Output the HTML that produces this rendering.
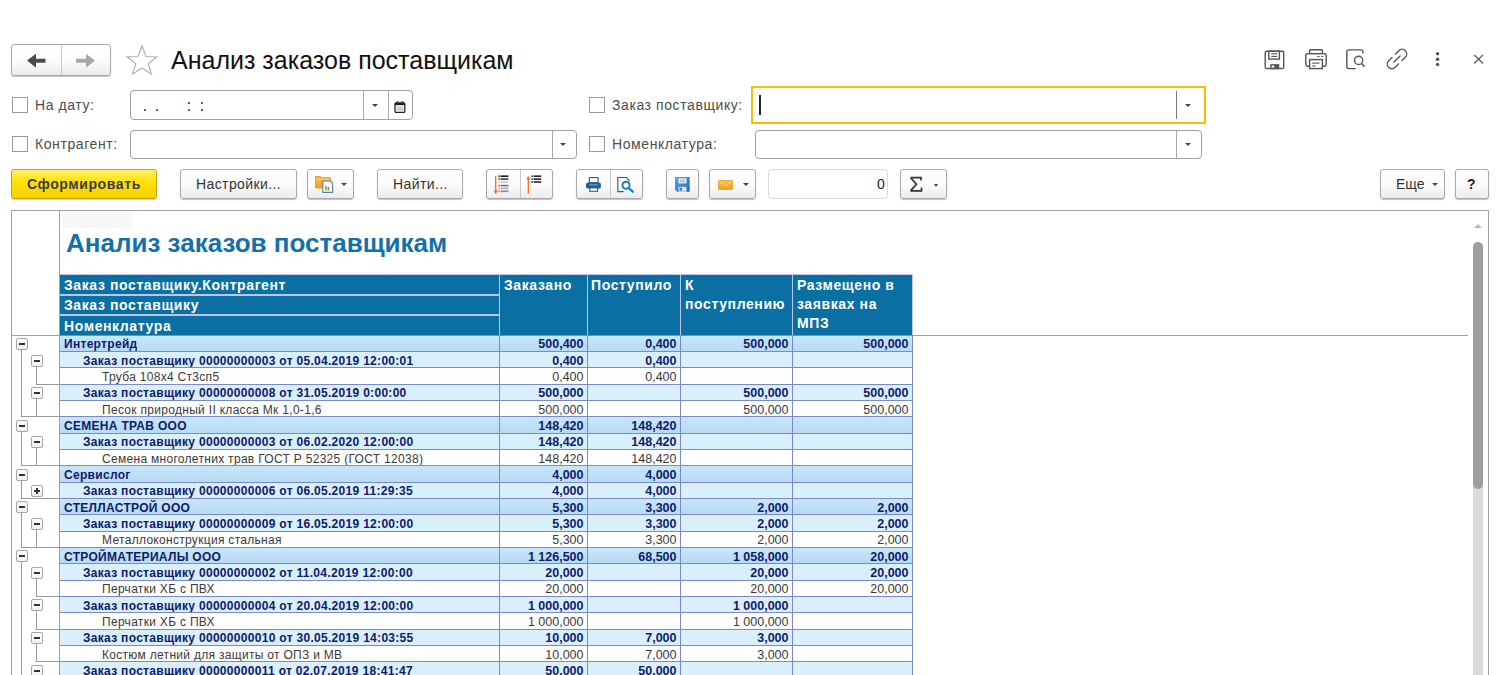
<!DOCTYPE html><html><head><meta charset='utf-8'><title>Анализ заказов поставщикам</title><style>
*{box-sizing:border-box;margin:0;padding:0}
html,body{width:1500px;height:675px;overflow:hidden;background:#fff;font-family:"Liberation Sans",sans-serif;color:#333}
.abs{position:absolute}
.btn{position:absolute;border:1px solid #a9a9a9;border-radius:3px;background:linear-gradient(#ffffff 0%,#fbfbfb 55%,#ececec 100%);box-shadow:0 1px 1px rgba(0,0,0,.25)}
.lbl{position:absolute;font-size:14px;letter-spacing:.58px;color:#4d4d4d;white-space:nowrap;line-height:16px}
.chk{position:absolute;width:16px;height:16px;border:1px solid #9b9b9b;background:#fff}
.fld{position:absolute;border:1px solid #a0a0a0;border-radius:4px;background:#fff}
.vd{position:absolute;top:0;bottom:0;width:1px;background:#a8a8a8}
.arr{position:absolute;width:0;height:0;border-left:4px solid transparent;border-right:4px solid transparent;border-top:4px solid #444}
.btxt{position:absolute;font-size:14px;letter-spacing:.4px;color:#333;white-space:nowrap;line-height:16px}
.row{position:absolute;left:60px;width:853px}
.cell{position:absolute;top:0;height:100%;white-space:nowrap;overflow:hidden;font-size:12px;line-height:15px;padding-top:1.6px}
.hd{position:absolute;color:#fff;font-weight:bold;font-size:14px;letter-spacing:.6px;line-height:19.2px;white-space:nowrap;margin-top:.8px}
.tg{position:absolute;width:12px;height:12px;border:1px solid #a6a6a6;border-radius:2px;background:linear-gradient(#fff,#f0f0f0)}
.tg:after{content:"";position:absolute;left:2px;top:4px;width:6px;height:2px;background:#333}
.tg.plus:before{content:"";position:absolute;left:4px;top:2px;width:2px;height:6px;background:#333}
.tl{position:absolute;background:#9a9a9a}
</style></head><body>
<div class="btn" style="left:11px;top:44px;width:100px;height:32px"></div>
<div class="abs" style="left:61px;top:45px;width:1px;height:30px;background:#c8c8c8"></div>
<svg class="abs" style="left:26px;top:52px" width="24" height="16" viewBox="0 0 24 16"><path d="M1 8.5 L10 1.8 L10 6.8 L19.5 6.8 L19.5 10.7 L10 10.7 L10 15.7 Z" fill="#4a4a4a"/></svg>
<svg class="abs" style="left:73px;top:52px" width="24" height="16" viewBox="0 0 24 16"><path d="M22 8.5 L13 1.8 L13 6.8 L3 6.8 L3 10.7 L13 10.7 L13 15.7 Z" fill="#a8a8a8"/></svg>
<svg class="abs" style="left:125px;top:44px" width="34" height="32" viewBox="0 0 34 32"><path d="M17 2 L21 12.5 L32 12.8 L23.3 19.6 L26.4 30.2 L17 24 L7.6 30.2 L10.7 19.6 L2 12.8 L13 12.5 Z" fill="none" stroke="#a9b3b8" stroke-width="1.2"/></svg>
<div class="abs" style="left:171px;top:45px;font-size:25px;letter-spacing:0;line-height:30px;color:#111;white-space:nowrap">Анализ заказов поставщикам</div>
<svg class="abs" style="left:1258px;top:44px" width="70" height="30" viewBox="0 0 70 30" fill="none" stroke="#555555" stroke-width="1.4"><rect x="7.2" y="7.2" width="18.5" height="17.3" rx="1.6"/><rect x="10.8" y="7.2" width="10.6" height="7.9"/><line x1="13.2" y1="9.8" x2="19.3" y2="9.8" stroke-width="1.1"/><line x1="13.2" y1="12.4" x2="19.3" y2="12.4" stroke-width="1.1"/><rect x="12.9" y="20.9" width="7.6" height="3.6"/><rect x="16.3" y="20.4" width="4.4" height="4.3" fill="#555555" stroke="none"/><rect x="51.6" y="5.8" width="12.8" height="3.8" rx="0.8"/><path d="M51.6 22.2 H50 A2.2 2.2 0 0 1 47.8 20 V11.8 A2.2 2.2 0 0 1 50 9.6 H66 A2.2 2.2 0 0 1 68.2 11.8 V20 A2.2 2.2 0 0 1 66 22.2 H64.4"/><rect x="51.6" y="15.6" width="12.8" height="9" fill="#fff"/><line x1="54.2" y1="19.1" x2="61.6" y2="19.1" stroke-width="1.1"/><line x1="54.2" y1="22" x2="57.4" y2="22" stroke-width="1.1"/><line x1="59.3" y1="12.5" x2="61.6" y2="12.5" stroke-width="1.1"/><line x1="63.2" y1="12.5" x2="65.3" y2="12.5" stroke-width="1.1"/></svg>
<svg class="abs" style="left:1338px;top:44px" width="30" height="30" viewBox="0 0 30 30" fill="none" stroke="#555555" stroke-width="1.4"><path d="M17.8 24.6 H10.8 A2 2 0 0 1 8.8 22.6 V7.9 A2 2 0 0 1 10.8 5.9 H22.9 A2 2 0 0 1 24.9 7.9 V9.4"/><circle cx="20.6" cy="16.4" r="4.1"/><line x1="23.6" y1="19.5" x2="26.5" y2="22.8" stroke-width="1.6"/></svg>
<svg class="abs" style="left:1381.7px;top:44px" width="30" height="30" viewBox="0 0 30 30" fill="none" stroke="#555555" stroke-width="1.4" stroke-linecap="round"><g transform="translate(15 15) rotate(-45)"><path d="M-2.3 -4.6 H-7.2 A4.6 4.6 0 0 0 -7.2 4.6 H-2.3"/><path d="M2.6 -4.6 H7.2 A4.6 4.6 0 0 1 7.2 4.6 H2.6"/><line x1="-4.3" y1="0" x2="4.4" y2="0"/></g></svg>
<svg class="abs" style="left:1432px;top:48px" width="12" height="22" viewBox="0 0 12 22" fill="#555555"><circle cx="5.6" cy="5.8" r="1.75"/><circle cx="5.6" cy="11.2" r="1.75"/><circle cx="5.6" cy="16.5" r="1.75"/></svg>
<svg class="abs" style="left:1462px;top:44px" width="35" height="30" viewBox="0 0 35 30" stroke="#555555" stroke-width="1.25"><line x1="12.2" y1="10.9" x2="21" y2="19.5"/><line x1="21" y1="10.9" x2="12.2" y2="19.5"/></svg>
<div class="chk" style="left:12px;top:97px"></div>
<div class="lbl" style="left:35px;top:97px">На дату:</div>
<div class="fld" style="left:130px;top:90px;width:283px;height:30px"><div class="vd" style="left:232px"></div><div class="vd" style="left:257px"></div></div>
<div class="arr" style="left:372.3px;top:103.8px;border-left-width:3px;border-right-width:3px;border-top-width:3.5px"></div>
<svg class="abs" style="left:393px;top:100px" width="13" height="14" viewBox="0 0 13 14"><rect x="2" y="2.8" width="9.8" height="9.6" rx="1" fill="#fff" stroke="#222" stroke-width="1.3"/><rect x="2" y="2.8" width="9.8" height="2.4" fill="#222"/><rect x="3.8" y="1.2" width="1.3" height="2" fill="#333"/><rect x="8.6" y="1.2" width="1.3" height="2" fill="#333"/><rect x="3.6" y="6.8" width="6.6" height="1.6" fill="#bbb"/><rect x="3.6" y="9.3" width="6.6" height="1" fill="#999"/></svg>
<div class="abs" style="left:143.5px;top:108.5px;width:2px;height:2px;border-radius:1px;background:#4a1a48"></div>
<div class="abs" style="left:155.8px;top:108.5px;width:2px;height:2px;border-radius:1px;background:#4a1a48"></div>
<div class="abs" style="left:188.2px;top:101.8px;width:2px;height:2px;border-radius:1px;background:#4a1a48"></div>
<div class="abs" style="left:188.2px;top:108.5px;width:2px;height:2px;border-radius:1px;background:#4a1a48"></div>
<div class="abs" style="left:200.8px;top:101.8px;width:2px;height:2px;border-radius:1px;background:#4a1a48"></div>
<div class="abs" style="left:200.8px;top:108.5px;width:2px;height:2px;border-radius:1px;background:#4a1a48"></div>
<div class="chk" style="left:12px;top:136px"></div>
<div class="lbl" style="left:35px;top:136px">Контрагент:</div>
<div class="fld" style="left:130px;top:130px;width:447px;height:29px"><div class="vd" style="left:420.5px"></div></div>
<div class="arr" style="left:560.3px;top:143.3px;border-left-width:3px;border-right-width:3px;border-top-width:3.5px"></div>
<div class="chk" style="left:589px;top:97px"></div>
<div class="lbl" style="left:612px;top:97px">Заказ поставщику:</div>
<div class="abs" style="left:751px;top:86px;width:455px;height:38px;border:2px solid #f7bf00;background:#fff"></div>
<div class="abs" style="left:1176px;top:91px;width:1px;height:28px;background:#777"></div>
<div class="abs" style="left:759px;top:95px;width:2px;height:20px;background:#222"></div>
<div class="arr" style="left:1184.9px;top:104px;border-left-width:3px;border-right-width:3px;border-top-width:3.5px"></div>
<div class="chk" style="left:589px;top:136px"></div>
<div class="lbl" style="left:612px;top:136px">Номенклатура:</div>
<div class="fld" style="left:755px;top:130px;width:447px;height:29px"><div class="vd" style="left:420px"></div></div>
<div class="arr" style="left:1184.9px;top:143.4px;border-left-width:3px;border-right-width:3px;border-top-width:3.5px"></div>
<div class="abs" style="left:11px;top:169px;width:146px;height:30px;border:1px solid #c9a400;border-radius:3px;background:linear-gradient(#fff06a 0%,#ffe100 45%,#f5d000 100%);box-shadow:0 1px 1px rgba(0,0,0,.2)"></div>
<div class="btxt" style="left:27px;top:176px;font-weight:bold;color:#3a3a4a;letter-spacing:.6px">Сформировать</div>
<div class="btn" style="left:180px;top:169px;width:117px;height:30px"></div>
<div class="btxt" style="left:196px;top:176px">Настройки...</div>
<div class="btn" style="left:307px;top:169px;width:47px;height:30px"></div>
<svg class="abs" style="left:304px;top:166px" width="54" height="36" viewBox="0 0 54 36"><defs><linearGradient id="fg" x1="0" y1="0" x2="0" y2="1"><stop offset="0" stop-color="#f8c050"/><stop offset="1" stop-color="#eda028"/></linearGradient></defs><path d="M11.6 10.6 H16.5 L18 11.8 H26.4 V22 H11.6 Z" fill="url(#fg)" stroke="#e0901a" stroke-width="0.9"/><line x1="11.8" y1="13.4" x2="26.2" y2="13.4" stroke="#fce0a0" stroke-width="0.8"/><path d="M18.8 15 H26.6 L28.6 17 V26.4 H18.8 Z" fill="#fafcfe" stroke="#56809f" stroke-width="1.1"/><rect x="21.2" y="20" width="1.5" height="4.5" fill="#e86060"/><rect x="23.6" y="21" width="1.5" height="3.5" fill="#48b048"/></svg>
<div class="arr" style="left:341px;top:183px;border-left-width:3px;border-right-width:3px;border-top-width:3px"></div>
<div class="btn" style="left:377px;top:169px;width:86px;height:30px"></div>
<div class="btxt" style="left:393px;top:176px">Найти...</div>
<div class="btn" style="left:486px;top:169px;width:67px;height:30px"></div>
<div class="abs" style="left:520px;top:170px;width:1px;height:28px;background:#c8c8c8"></div>
<svg class="abs" style="left:480px;top:166px" width="80" height="36" viewBox="0 0 80 36"><line x1="15.7" y1="10" x2="15.7" y2="25.5" stroke="#f46a1f" stroke-width="1.3"/><path d="M13.5 24.6 L17.9 24.6 L15.7 28.2 Z" fill="#f46a1f"/><rect x="18.4" y="9.399999999999999" width="1.4" height="1.6" fill="#1a1a1a"/><rect x="20.6" y="9.399999999999999" width="7.8" height="1.6" fill="#1a1a1a"/><rect x="18.4" y="12.299999999999999" width="1.4" height="1.6" fill="#3a3a3a"/><rect x="20.6" y="12.299999999999999" width="7.8" height="1.6" fill="#3a3a3a"/><rect x="18.4" y="15.2" width="1.4" height="1.6" fill="#c8c8c8"/><rect x="20.6" y="15.2" width="7.8" height="1.6" fill="#c8c8c8"/><rect x="18.4" y="18.8" width="1.4" height="1.6" fill="#707070"/><rect x="20.6" y="18.8" width="7.8" height="1.6" fill="#707070"/><rect x="18.4" y="21.599999999999998" width="1.4" height="1.6" fill="#b0b0b0"/><rect x="20.6" y="21.599999999999998" width="7.8" height="1.6" fill="#b0b0b0"/><rect x="18.4" y="24.5" width="1.4" height="1.6" fill="#8a8a8a"/><rect x="20.6" y="24.5" width="7.8" height="1.6" fill="#8a8a8a"/><line x1="48.3" y1="13" x2="48.3" y2="27.8" stroke="#f46a1f" stroke-width="1.3"/><path d="M46.2 13.6 L50.4 13.6 L48.3 10 Z" fill="#f46a1f"/><rect x="51.4" y="9.399999999999999" width="1.4" height="1.6" fill="#222"/><rect x="53.6" y="9.399999999999999" width="7.6" height="1.6" fill="#222"/><rect x="51.4" y="12.299999999999999" width="1.4" height="1.6" fill="#222"/><rect x="53.6" y="12.299999999999999" width="7.6" height="1.6" fill="#222"/><rect x="51.4" y="15.2" width="1.4" height="1.6" fill="#222"/><rect x="53.6" y="15.2" width="7.6" height="1.6" fill="#222"/></svg>
<div class="btn" style="left:576px;top:169px;width:67px;height:30px"></div>
<div class="abs" style="left:610px;top:170px;width:1px;height:28px;background:#c8c8c8"></div>
<svg class="abs" style="left:570px;top:166px" width="80" height="36" viewBox="0 0 80 36"><rect x="19.3" y="11.6" width="8.8" height="5.2" fill="#fff" stroke="#2a5a84" stroke-width="1.1"/><rect x="16" y="16.4" width="14.9" height="6.2" rx="2.2" fill="#1d5d92"/><rect x="19.2" y="18" width="8.5" height="1.6" fill="#5f8fb8"/><rect x="19.8" y="21.9" width="7.8" height="3.4" fill="#fff" stroke="#2a5a84" stroke-width="1.1"/><path d="M53.6 25.6 H47.8 V11.5 H56.3 L59 14.2 V15.6" fill="none" stroke="#33597c" stroke-width="1.1"/><circle cx="56" cy="19.3" r="3.5" fill="#fff" stroke="#1a7fbf" stroke-width="2"/><line x1="58.5" y1="21.9" x2="62.8" y2="25.7" stroke="#1a7fbf" stroke-width="2.3" stroke-linecap="round"/></svg>
<div class="btn" style="left:666px;top:169px;width:33px;height:30px"></div>
<svg class="abs" style="left:675px;top:177px" width="15" height="15" viewBox="0 0 15 15"><defs><linearGradient id="sg" x1="0" y1="0" x2="1" y2="1"><stop offset="0" stop-color="#5aa8e8"/><stop offset="1" stop-color="#1f6aae"/></linearGradient></defs><path d="M0 0 H14.7 V14.7 H2 L0 12.7 Z" fill="url(#sg)"/><rect x="3.5" y="1.2" width="8" height="5.2" fill="#e6eef6"/><rect x="4.8" y="2.6" width="5.4" height="0.8" fill="#9ab"/><rect x="4.8" y="4.3" width="5.4" height="0.8" fill="#9ab"/><rect x="3.5" y="9.8" width="8" height="4.9" fill="#d6e2ee"/><rect x="4.6" y="10.8" width="2.4" height="3" fill="#4a7fb0"/></svg>
<div class="btn" style="left:709px;top:169px;width:47px;height:30px"></div>
<svg class="abs" style="left:718px;top:179.5px" width="15" height="10" viewBox="0 0 15 10"><defs><linearGradient id="mg" x1="0" y1="0" x2="0" y2="1"><stop offset="0" stop-color="#f8c150"/><stop offset="1" stop-color="#f0a020"/></linearGradient></defs><rect x="0.4" y="0.4" width="14.2" height="9.2" rx="0.8" fill="url(#mg)" stroke="#e8961a" stroke-width="0.8"/><path d="M0.8 0.8 L7.5 5.5 L14.2 0.8" fill="none" stroke="#fbd585" stroke-width="1"/></svg>
<div class="arr" style="left:743px;top:183px;border-left-width:3px;border-right-width:3px;border-top-width:3px"></div>
<div class="abs" style="left:768px;top:169px;width:120px;height:30px;border:1px solid #d9d9d9;border-radius:4px;background:#fff"></div>
<div class="abs" style="left:877px;top:176px;font-size:14px;line-height:16px;color:#222">0</div>
<div class="btn" style="left:900px;top:169px;width:47px;height:30px"></div>
<svg class="abs" style="left:898px;top:166px" width="52" height="36" viewBox="0 0 52 36" fill="none" stroke="#333" stroke-width="1.7"><path d="M12.4 11.7 H23 V14.6"/><path d="M12.9 12 L18.4 18.2 L12.7 24.6"/><path d="M12.4 24.9 H23.5 V21.6"/></svg>
<div class="arr" style="left:933.5px;top:183.5px;border-left-width:2.5px;border-right-width:2.5px;border-top-width:3px"></div>
<div class="btn" style="left:1380px;top:169px;width:65px;height:30px"></div>
<div class="btxt" style="left:1396px;top:176px;letter-spacing:0">Еще</div>
<div class="arr" style="left:1432px;top:183px;border-left-width:3px;border-right-width:3px;border-top-width:3px"></div>
<div class="btn" style="left:1455px;top:169px;width:34px;height:30px"></div>
<div class="btxt" style="left:1467px;top:176px;font-weight:bold;color:#222">?</div>
<div class="abs" style="left:11px;top:210px;width:1478px;height:480px;border:1px solid #a0a0a0;border-bottom:none"></div>
<div class="abs" style="left:59px;top:211px;width:1px;height:470px;background:#a0a0a0"></div>
<div class="abs" style="left:62px;top:212px;width:70px;height:16px;background:#f7f7f7"></div>
<div class="abs" style="left:12px;top:335px;width:48px;height:1px;background:#a0a0a0"></div>
<div class="abs" style="left:912px;top:335px;width:556px;height:1px;background:#a0a0a0"></div>
<div class="abs" style="left:1473px;top:242px;width:10px;height:440px;background:#dadada;border-radius:5px 5px 0 0"></div>
<div class="abs" style="left:1473px;top:242px;width:10px;height:247px;background:#9e9e9e;border-radius:5px"></div>
<div class="arr" style="left:1474px;top:224px;border-top:none;border-bottom:4px solid #b8b8b8"></div>
<div class="abs" style="left:66px;top:227.5px;font-size:26px;font-weight:bold;line-height:30px;color:#1470a8;white-space:nowrap">Анализ заказов поставщикам</div>
<div class="abs" style="left:60px;top:274px;width:853px;height:62px;background:#bcc6ea"></div>
<div class="abs" style="left:60px;top:275px;width:439px;height:19px;background:#0a6fa3"></div>
<div class="abs" style="left:60px;top:296px;width:439px;height:18px;background:#0a6fa3"></div>
<div class="abs" style="left:60px;top:316px;width:439px;height:19px;background:#0a6fa3"></div>
<div class="abs" style="left:500px;top:275px;width:87px;height:60px;background:#0a6fa3"></div>
<div class="abs" style="left:588px;top:275px;width:92px;height:60px;background:#0a6fa3"></div>
<div class="abs" style="left:681px;top:275px;width:111px;height:60px;background:#0a6fa3"></div>
<div class="abs" style="left:793px;top:275px;width:119px;height:60px;background:#0a6fa3"></div>
<div class="hd" style="left:64px;top:275px">Заказ поставщику.Контрагент</div>
<div class="hd" style="left:64px;top:295px">Заказ поставщику</div>
<div class="hd" style="left:64px;top:316px">Номенклатура</div>
<div class="hd" style="left:504px;top:275px">Заказано</div>
<div class="hd" style="left:591px;top:275px">Поступило</div>
<div class="hd" style="left:685px;top:275px">К<br>поступлению</div>
<div class="hd" style="left:797px;top:275px">Размещено в<br>заявках на<br>МПЗ</div>
<div class="abs" style="left:60px;top:335px;width:853px;height:344.93px;background:#7c88c8"></div>
<div class="abs" style="left:60px;top:335.80px;width:439px;height:15.33px;background:linear-gradient(#c8e6f9,#b6dbf3)"></div>
<div class="abs" style="left:500px;top:335.80px;width:87px;height:15.33px;background:linear-gradient(#c8e6f9,#b6dbf3)"></div>
<div class="abs" style="left:588px;top:335.80px;width:92px;height:15.33px;background:linear-gradient(#c8e6f9,#b6dbf3)"></div>
<div class="abs" style="left:681px;top:335.80px;width:111px;height:15.33px;background:linear-gradient(#c8e6f9,#b6dbf3)"></div>
<div class="abs" style="left:793px;top:335.80px;width:119px;height:15.33px;background:linear-gradient(#c8e6f9,#b6dbf3)"></div>
<div class="cell" style="left:64px;top:335.80px;height:15.33px;font-weight:bold;color:#0f1a6a;letter-spacing:.3px">Интертрейд</div>
<div class="cell" style="left:500px;width:83.5px;text-align:right;top:335.80px;height:15.33px;font-weight:bold;color:#0f1a6a;font-size:12.5px;padding-top:1.5px">500,400</div>
<div class="cell" style="left:588px;width:88.5px;text-align:right;top:335.80px;height:15.33px;font-weight:bold;color:#0f1a6a;font-size:12.5px;padding-top:1.5px">0,400</div>
<div class="cell" style="left:681px;width:107.5px;text-align:right;top:335.80px;height:15.33px;font-weight:bold;color:#0f1a6a;font-size:12.5px;padding-top:1.5px">500,000</div>
<div class="cell" style="left:793px;width:115.5px;text-align:right;top:335.80px;height:15.33px;font-weight:bold;color:#0f1a6a;font-size:12.5px;padding-top:1.5px">500,000</div>
<div class="abs" style="left:60px;top:352.13px;width:439px;height:15.33px;background:#d9f0fc"></div>
<div class="abs" style="left:500px;top:352.13px;width:87px;height:15.33px;background:#d9f0fc"></div>
<div class="abs" style="left:588px;top:352.13px;width:92px;height:15.33px;background:#d9f0fc"></div>
<div class="abs" style="left:681px;top:352.13px;width:111px;height:15.33px;background:#d9f0fc"></div>
<div class="abs" style="left:793px;top:352.13px;width:119px;height:15.33px;background:#d9f0fc"></div>
<div class="cell" style="left:83px;top:352.13px;height:15.33px;font-weight:bold;color:#0f1a6a;letter-spacing:.3px">Заказ поставщику 00000000003 от 05.04.2019 12:00:01</div>
<div class="cell" style="left:500px;width:83.5px;text-align:right;top:352.13px;height:15.33px;font-weight:bold;color:#0f1a6a;font-size:12.5px;padding-top:1.5px">0,400</div>
<div class="cell" style="left:588px;width:88.5px;text-align:right;top:352.13px;height:15.33px;font-weight:bold;color:#0f1a6a;font-size:12.5px;padding-top:1.5px">0,400</div>
<div class="abs" style="left:60px;top:368.46px;width:439px;height:15.33px;background:#ffffff"></div>
<div class="abs" style="left:500px;top:368.46px;width:87px;height:15.33px;background:#ffffff"></div>
<div class="abs" style="left:588px;top:368.46px;width:92px;height:15.33px;background:#ffffff"></div>
<div class="abs" style="left:681px;top:368.46px;width:111px;height:15.33px;background:#ffffff"></div>
<div class="abs" style="left:793px;top:368.46px;width:119px;height:15.33px;background:#ffffff"></div>
<div class="cell" style="left:102px;top:368.46px;height:15.33px;font-weight:normal;color:#3a3a3a;letter-spacing:.3px">Труба 108х4 Ст3сп5</div>
<div class="cell" style="left:500px;width:83.5px;text-align:right;top:368.46px;height:15.33px;font-weight:normal;color:#3a3a3a;font-size:12.5px;padding-top:1.5px">0,400</div>
<div class="cell" style="left:588px;width:88.5px;text-align:right;top:368.46px;height:15.33px;font-weight:normal;color:#3a3a3a;font-size:12.5px;padding-top:1.5px">0,400</div>
<div class="abs" style="left:60px;top:384.79px;width:439px;height:15.33px;background:#d9f0fc"></div>
<div class="abs" style="left:500px;top:384.79px;width:87px;height:15.33px;background:#d9f0fc"></div>
<div class="abs" style="left:588px;top:384.79px;width:92px;height:15.33px;background:#d9f0fc"></div>
<div class="abs" style="left:681px;top:384.79px;width:111px;height:15.33px;background:#d9f0fc"></div>
<div class="abs" style="left:793px;top:384.79px;width:119px;height:15.33px;background:#d9f0fc"></div>
<div class="cell" style="left:83px;top:384.79px;height:15.33px;font-weight:bold;color:#0f1a6a;letter-spacing:.3px">Заказ поставщику 00000000008 от 31.05.2019 0:00:00</div>
<div class="cell" style="left:500px;width:83.5px;text-align:right;top:384.79px;height:15.33px;font-weight:bold;color:#0f1a6a;font-size:12.5px;padding-top:1.5px">500,000</div>
<div class="cell" style="left:681px;width:107.5px;text-align:right;top:384.79px;height:15.33px;font-weight:bold;color:#0f1a6a;font-size:12.5px;padding-top:1.5px">500,000</div>
<div class="cell" style="left:793px;width:115.5px;text-align:right;top:384.79px;height:15.33px;font-weight:bold;color:#0f1a6a;font-size:12.5px;padding-top:1.5px">500,000</div>
<div class="abs" style="left:60px;top:401.12px;width:439px;height:15.33px;background:#ffffff"></div>
<div class="abs" style="left:500px;top:401.12px;width:87px;height:15.33px;background:#ffffff"></div>
<div class="abs" style="left:588px;top:401.12px;width:92px;height:15.33px;background:#ffffff"></div>
<div class="abs" style="left:681px;top:401.12px;width:111px;height:15.33px;background:#ffffff"></div>
<div class="abs" style="left:793px;top:401.12px;width:119px;height:15.33px;background:#ffffff"></div>
<div class="cell" style="left:102px;top:401.12px;height:15.33px;font-weight:normal;color:#3a3a3a;letter-spacing:.3px">Песок природный II класса Мк 1,0-1,6</div>
<div class="cell" style="left:500px;width:83.5px;text-align:right;top:401.12px;height:15.33px;font-weight:normal;color:#3a3a3a;font-size:12.5px;padding-top:1.5px">500,000</div>
<div class="cell" style="left:681px;width:107.5px;text-align:right;top:401.12px;height:15.33px;font-weight:normal;color:#3a3a3a;font-size:12.5px;padding-top:1.5px">500,000</div>
<div class="cell" style="left:793px;width:115.5px;text-align:right;top:401.12px;height:15.33px;font-weight:normal;color:#3a3a3a;font-size:12.5px;padding-top:1.5px">500,000</div>
<div class="abs" style="left:60px;top:417.45px;width:439px;height:15.33px;background:linear-gradient(#c8e6f9,#b6dbf3)"></div>
<div class="abs" style="left:500px;top:417.45px;width:87px;height:15.33px;background:linear-gradient(#c8e6f9,#b6dbf3)"></div>
<div class="abs" style="left:588px;top:417.45px;width:92px;height:15.33px;background:linear-gradient(#c8e6f9,#b6dbf3)"></div>
<div class="abs" style="left:681px;top:417.45px;width:111px;height:15.33px;background:linear-gradient(#c8e6f9,#b6dbf3)"></div>
<div class="abs" style="left:793px;top:417.45px;width:119px;height:15.33px;background:linear-gradient(#c8e6f9,#b6dbf3)"></div>
<div class="cell" style="left:64px;top:417.45px;height:15.33px;font-weight:bold;color:#0f1a6a;letter-spacing:.3px">СЕМЕНА ТРАВ ООО</div>
<div class="cell" style="left:500px;width:83.5px;text-align:right;top:417.45px;height:15.33px;font-weight:bold;color:#0f1a6a;font-size:12.5px;padding-top:1.5px">148,420</div>
<div class="cell" style="left:588px;width:88.5px;text-align:right;top:417.45px;height:15.33px;font-weight:bold;color:#0f1a6a;font-size:12.5px;padding-top:1.5px">148,420</div>
<div class="abs" style="left:60px;top:433.78px;width:439px;height:15.33px;background:#d9f0fc"></div>
<div class="abs" style="left:500px;top:433.78px;width:87px;height:15.33px;background:#d9f0fc"></div>
<div class="abs" style="left:588px;top:433.78px;width:92px;height:15.33px;background:#d9f0fc"></div>
<div class="abs" style="left:681px;top:433.78px;width:111px;height:15.33px;background:#d9f0fc"></div>
<div class="abs" style="left:793px;top:433.78px;width:119px;height:15.33px;background:#d9f0fc"></div>
<div class="cell" style="left:83px;top:433.78px;height:15.33px;font-weight:bold;color:#0f1a6a;letter-spacing:.3px">Заказ поставщику 00000000003 от 06.02.2020 12:00:00</div>
<div class="cell" style="left:500px;width:83.5px;text-align:right;top:433.78px;height:15.33px;font-weight:bold;color:#0f1a6a;font-size:12.5px;padding-top:1.5px">148,420</div>
<div class="cell" style="left:588px;width:88.5px;text-align:right;top:433.78px;height:15.33px;font-weight:bold;color:#0f1a6a;font-size:12.5px;padding-top:1.5px">148,420</div>
<div class="abs" style="left:60px;top:450.11px;width:439px;height:15.33px;background:#ffffff"></div>
<div class="abs" style="left:500px;top:450.11px;width:87px;height:15.33px;background:#ffffff"></div>
<div class="abs" style="left:588px;top:450.11px;width:92px;height:15.33px;background:#ffffff"></div>
<div class="abs" style="left:681px;top:450.11px;width:111px;height:15.33px;background:#ffffff"></div>
<div class="abs" style="left:793px;top:450.11px;width:119px;height:15.33px;background:#ffffff"></div>
<div class="cell" style="left:102px;top:450.11px;height:15.33px;font-weight:normal;color:#3a3a3a;letter-spacing:.3px">Семена многолетних трав ГОСТ Р 52325 (ГОСТ 12038)</div>
<div class="cell" style="left:500px;width:83.5px;text-align:right;top:450.11px;height:15.33px;font-weight:normal;color:#3a3a3a;font-size:12.5px;padding-top:1.5px">148,420</div>
<div class="cell" style="left:588px;width:88.5px;text-align:right;top:450.11px;height:15.33px;font-weight:normal;color:#3a3a3a;font-size:12.5px;padding-top:1.5px">148,420</div>
<div class="abs" style="left:60px;top:466.44px;width:439px;height:15.33px;background:linear-gradient(#c8e6f9,#b6dbf3)"></div>
<div class="abs" style="left:500px;top:466.44px;width:87px;height:15.33px;background:linear-gradient(#c8e6f9,#b6dbf3)"></div>
<div class="abs" style="left:588px;top:466.44px;width:92px;height:15.33px;background:linear-gradient(#c8e6f9,#b6dbf3)"></div>
<div class="abs" style="left:681px;top:466.44px;width:111px;height:15.33px;background:linear-gradient(#c8e6f9,#b6dbf3)"></div>
<div class="abs" style="left:793px;top:466.44px;width:119px;height:15.33px;background:linear-gradient(#c8e6f9,#b6dbf3)"></div>
<div class="cell" style="left:64px;top:466.44px;height:15.33px;font-weight:bold;color:#0f1a6a;letter-spacing:.3px">Сервислог</div>
<div class="cell" style="left:500px;width:83.5px;text-align:right;top:466.44px;height:15.33px;font-weight:bold;color:#0f1a6a;font-size:12.5px;padding-top:1.5px">4,000</div>
<div class="cell" style="left:588px;width:88.5px;text-align:right;top:466.44px;height:15.33px;font-weight:bold;color:#0f1a6a;font-size:12.5px;padding-top:1.5px">4,000</div>
<div class="abs" style="left:60px;top:482.77px;width:439px;height:15.33px;background:#d9f0fc"></div>
<div class="abs" style="left:500px;top:482.77px;width:87px;height:15.33px;background:#d9f0fc"></div>
<div class="abs" style="left:588px;top:482.77px;width:92px;height:15.33px;background:#d9f0fc"></div>
<div class="abs" style="left:681px;top:482.77px;width:111px;height:15.33px;background:#d9f0fc"></div>
<div class="abs" style="left:793px;top:482.77px;width:119px;height:15.33px;background:#d9f0fc"></div>
<div class="cell" style="left:83px;top:482.77px;height:15.33px;font-weight:bold;color:#0f1a6a;letter-spacing:.3px">Заказ поставщику 00000000006 от 06.05.2019 11:29:35</div>
<div class="cell" style="left:500px;width:83.5px;text-align:right;top:482.77px;height:15.33px;font-weight:bold;color:#0f1a6a;font-size:12.5px;padding-top:1.5px">4,000</div>
<div class="cell" style="left:588px;width:88.5px;text-align:right;top:482.77px;height:15.33px;font-weight:bold;color:#0f1a6a;font-size:12.5px;padding-top:1.5px">4,000</div>
<div class="abs" style="left:60px;top:499.10px;width:439px;height:15.33px;background:linear-gradient(#c8e6f9,#b6dbf3)"></div>
<div class="abs" style="left:500px;top:499.10px;width:87px;height:15.33px;background:linear-gradient(#c8e6f9,#b6dbf3)"></div>
<div class="abs" style="left:588px;top:499.10px;width:92px;height:15.33px;background:linear-gradient(#c8e6f9,#b6dbf3)"></div>
<div class="abs" style="left:681px;top:499.10px;width:111px;height:15.33px;background:linear-gradient(#c8e6f9,#b6dbf3)"></div>
<div class="abs" style="left:793px;top:499.10px;width:119px;height:15.33px;background:linear-gradient(#c8e6f9,#b6dbf3)"></div>
<div class="cell" style="left:64px;top:499.10px;height:15.33px;font-weight:bold;color:#0f1a6a;letter-spacing:.3px">СТЕЛЛАСТРОЙ ООО</div>
<div class="cell" style="left:500px;width:83.5px;text-align:right;top:499.10px;height:15.33px;font-weight:bold;color:#0f1a6a;font-size:12.5px;padding-top:1.5px">5,300</div>
<div class="cell" style="left:588px;width:88.5px;text-align:right;top:499.10px;height:15.33px;font-weight:bold;color:#0f1a6a;font-size:12.5px;padding-top:1.5px">3,300</div>
<div class="cell" style="left:681px;width:107.5px;text-align:right;top:499.10px;height:15.33px;font-weight:bold;color:#0f1a6a;font-size:12.5px;padding-top:1.5px">2,000</div>
<div class="cell" style="left:793px;width:115.5px;text-align:right;top:499.10px;height:15.33px;font-weight:bold;color:#0f1a6a;font-size:12.5px;padding-top:1.5px">2,000</div>
<div class="abs" style="left:60px;top:515.43px;width:439px;height:15.33px;background:#d9f0fc"></div>
<div class="abs" style="left:500px;top:515.43px;width:87px;height:15.33px;background:#d9f0fc"></div>
<div class="abs" style="left:588px;top:515.43px;width:92px;height:15.33px;background:#d9f0fc"></div>
<div class="abs" style="left:681px;top:515.43px;width:111px;height:15.33px;background:#d9f0fc"></div>
<div class="abs" style="left:793px;top:515.43px;width:119px;height:15.33px;background:#d9f0fc"></div>
<div class="cell" style="left:83px;top:515.43px;height:15.33px;font-weight:bold;color:#0f1a6a;letter-spacing:.3px">Заказ поставщику 00000000009 от 16.05.2019 12:00:00</div>
<div class="cell" style="left:500px;width:83.5px;text-align:right;top:515.43px;height:15.33px;font-weight:bold;color:#0f1a6a;font-size:12.5px;padding-top:1.5px">5,300</div>
<div class="cell" style="left:588px;width:88.5px;text-align:right;top:515.43px;height:15.33px;font-weight:bold;color:#0f1a6a;font-size:12.5px;padding-top:1.5px">3,300</div>
<div class="cell" style="left:681px;width:107.5px;text-align:right;top:515.43px;height:15.33px;font-weight:bold;color:#0f1a6a;font-size:12.5px;padding-top:1.5px">2,000</div>
<div class="cell" style="left:793px;width:115.5px;text-align:right;top:515.43px;height:15.33px;font-weight:bold;color:#0f1a6a;font-size:12.5px;padding-top:1.5px">2,000</div>
<div class="abs" style="left:60px;top:531.76px;width:439px;height:15.33px;background:#ffffff"></div>
<div class="abs" style="left:500px;top:531.76px;width:87px;height:15.33px;background:#ffffff"></div>
<div class="abs" style="left:588px;top:531.76px;width:92px;height:15.33px;background:#ffffff"></div>
<div class="abs" style="left:681px;top:531.76px;width:111px;height:15.33px;background:#ffffff"></div>
<div class="abs" style="left:793px;top:531.76px;width:119px;height:15.33px;background:#ffffff"></div>
<div class="cell" style="left:102px;top:531.76px;height:15.33px;font-weight:normal;color:#3a3a3a;letter-spacing:.3px">Металлоконструкция стальная</div>
<div class="cell" style="left:500px;width:83.5px;text-align:right;top:531.76px;height:15.33px;font-weight:normal;color:#3a3a3a;font-size:12.5px;padding-top:1.5px">5,300</div>
<div class="cell" style="left:588px;width:88.5px;text-align:right;top:531.76px;height:15.33px;font-weight:normal;color:#3a3a3a;font-size:12.5px;padding-top:1.5px">3,300</div>
<div class="cell" style="left:681px;width:107.5px;text-align:right;top:531.76px;height:15.33px;font-weight:normal;color:#3a3a3a;font-size:12.5px;padding-top:1.5px">2,000</div>
<div class="cell" style="left:793px;width:115.5px;text-align:right;top:531.76px;height:15.33px;font-weight:normal;color:#3a3a3a;font-size:12.5px;padding-top:1.5px">2,000</div>
<div class="abs" style="left:60px;top:548.09px;width:439px;height:15.33px;background:linear-gradient(#c8e6f9,#b6dbf3)"></div>
<div class="abs" style="left:500px;top:548.09px;width:87px;height:15.33px;background:linear-gradient(#c8e6f9,#b6dbf3)"></div>
<div class="abs" style="left:588px;top:548.09px;width:92px;height:15.33px;background:linear-gradient(#c8e6f9,#b6dbf3)"></div>
<div class="abs" style="left:681px;top:548.09px;width:111px;height:15.33px;background:linear-gradient(#c8e6f9,#b6dbf3)"></div>
<div class="abs" style="left:793px;top:548.09px;width:119px;height:15.33px;background:linear-gradient(#c8e6f9,#b6dbf3)"></div>
<div class="cell" style="left:64px;top:548.09px;height:15.33px;font-weight:bold;color:#0f1a6a;letter-spacing:.3px">СТРОЙМАТЕРИАЛЫ ООО</div>
<div class="cell" style="left:500px;width:83.5px;text-align:right;top:548.09px;height:15.33px;font-weight:bold;color:#0f1a6a;font-size:12.5px;padding-top:1.5px">1 126,500</div>
<div class="cell" style="left:588px;width:88.5px;text-align:right;top:548.09px;height:15.33px;font-weight:bold;color:#0f1a6a;font-size:12.5px;padding-top:1.5px">68,500</div>
<div class="cell" style="left:681px;width:107.5px;text-align:right;top:548.09px;height:15.33px;font-weight:bold;color:#0f1a6a;font-size:12.5px;padding-top:1.5px">1 058,000</div>
<div class="cell" style="left:793px;width:115.5px;text-align:right;top:548.09px;height:15.33px;font-weight:bold;color:#0f1a6a;font-size:12.5px;padding-top:1.5px">20,000</div>
<div class="abs" style="left:60px;top:564.42px;width:439px;height:15.33px;background:#d9f0fc"></div>
<div class="abs" style="left:500px;top:564.42px;width:87px;height:15.33px;background:#d9f0fc"></div>
<div class="abs" style="left:588px;top:564.42px;width:92px;height:15.33px;background:#d9f0fc"></div>
<div class="abs" style="left:681px;top:564.42px;width:111px;height:15.33px;background:#d9f0fc"></div>
<div class="abs" style="left:793px;top:564.42px;width:119px;height:15.33px;background:#d9f0fc"></div>
<div class="cell" style="left:83px;top:564.42px;height:15.33px;font-weight:bold;color:#0f1a6a;letter-spacing:.3px">Заказ поставщику 00000000002 от 11.04.2019 12:00:00</div>
<div class="cell" style="left:500px;width:83.5px;text-align:right;top:564.42px;height:15.33px;font-weight:bold;color:#0f1a6a;font-size:12.5px;padding-top:1.5px">20,000</div>
<div class="cell" style="left:681px;width:107.5px;text-align:right;top:564.42px;height:15.33px;font-weight:bold;color:#0f1a6a;font-size:12.5px;padding-top:1.5px">20,000</div>
<div class="cell" style="left:793px;width:115.5px;text-align:right;top:564.42px;height:15.33px;font-weight:bold;color:#0f1a6a;font-size:12.5px;padding-top:1.5px">20,000</div>
<div class="abs" style="left:60px;top:580.75px;width:439px;height:15.33px;background:#ffffff"></div>
<div class="abs" style="left:500px;top:580.75px;width:87px;height:15.33px;background:#ffffff"></div>
<div class="abs" style="left:588px;top:580.75px;width:92px;height:15.33px;background:#ffffff"></div>
<div class="abs" style="left:681px;top:580.75px;width:111px;height:15.33px;background:#ffffff"></div>
<div class="abs" style="left:793px;top:580.75px;width:119px;height:15.33px;background:#ffffff"></div>
<div class="cell" style="left:102px;top:580.75px;height:15.33px;font-weight:normal;color:#3a3a3a;letter-spacing:.3px">Перчатки ХБ с ПВХ</div>
<div class="cell" style="left:500px;width:83.5px;text-align:right;top:580.75px;height:15.33px;font-weight:normal;color:#3a3a3a;font-size:12.5px;padding-top:1.5px">20,000</div>
<div class="cell" style="left:681px;width:107.5px;text-align:right;top:580.75px;height:15.33px;font-weight:normal;color:#3a3a3a;font-size:12.5px;padding-top:1.5px">20,000</div>
<div class="cell" style="left:793px;width:115.5px;text-align:right;top:580.75px;height:15.33px;font-weight:normal;color:#3a3a3a;font-size:12.5px;padding-top:1.5px">20,000</div>
<div class="abs" style="left:60px;top:597.08px;width:439px;height:15.33px;background:#d9f0fc"></div>
<div class="abs" style="left:500px;top:597.08px;width:87px;height:15.33px;background:#d9f0fc"></div>
<div class="abs" style="left:588px;top:597.08px;width:92px;height:15.33px;background:#d9f0fc"></div>
<div class="abs" style="left:681px;top:597.08px;width:111px;height:15.33px;background:#d9f0fc"></div>
<div class="abs" style="left:793px;top:597.08px;width:119px;height:15.33px;background:#d9f0fc"></div>
<div class="cell" style="left:83px;top:597.08px;height:15.33px;font-weight:bold;color:#0f1a6a;letter-spacing:.3px">Заказ поставщику 00000000004 от 20.04.2019 12:00:00</div>
<div class="cell" style="left:500px;width:83.5px;text-align:right;top:597.08px;height:15.33px;font-weight:bold;color:#0f1a6a;font-size:12.5px;padding-top:1.5px">1 000,000</div>
<div class="cell" style="left:681px;width:107.5px;text-align:right;top:597.08px;height:15.33px;font-weight:bold;color:#0f1a6a;font-size:12.5px;padding-top:1.5px">1 000,000</div>
<div class="abs" style="left:60px;top:613.41px;width:439px;height:15.33px;background:#ffffff"></div>
<div class="abs" style="left:500px;top:613.41px;width:87px;height:15.33px;background:#ffffff"></div>
<div class="abs" style="left:588px;top:613.41px;width:92px;height:15.33px;background:#ffffff"></div>
<div class="abs" style="left:681px;top:613.41px;width:111px;height:15.33px;background:#ffffff"></div>
<div class="abs" style="left:793px;top:613.41px;width:119px;height:15.33px;background:#ffffff"></div>
<div class="cell" style="left:102px;top:613.41px;height:15.33px;font-weight:normal;color:#3a3a3a;letter-spacing:.3px">Перчатки ХБ с ПВХ</div>
<div class="cell" style="left:500px;width:83.5px;text-align:right;top:613.41px;height:15.33px;font-weight:normal;color:#3a3a3a;font-size:12.5px;padding-top:1.5px">1 000,000</div>
<div class="cell" style="left:681px;width:107.5px;text-align:right;top:613.41px;height:15.33px;font-weight:normal;color:#3a3a3a;font-size:12.5px;padding-top:1.5px">1 000,000</div>
<div class="abs" style="left:60px;top:629.74px;width:439px;height:15.33px;background:#d9f0fc"></div>
<div class="abs" style="left:500px;top:629.74px;width:87px;height:15.33px;background:#d9f0fc"></div>
<div class="abs" style="left:588px;top:629.74px;width:92px;height:15.33px;background:#d9f0fc"></div>
<div class="abs" style="left:681px;top:629.74px;width:111px;height:15.33px;background:#d9f0fc"></div>
<div class="abs" style="left:793px;top:629.74px;width:119px;height:15.33px;background:#d9f0fc"></div>
<div class="cell" style="left:83px;top:629.74px;height:15.33px;font-weight:bold;color:#0f1a6a;letter-spacing:.3px">Заказ поставщику 00000000010 от 30.05.2019 14:03:55</div>
<div class="cell" style="left:500px;width:83.5px;text-align:right;top:629.74px;height:15.33px;font-weight:bold;color:#0f1a6a;font-size:12.5px;padding-top:1.5px">10,000</div>
<div class="cell" style="left:588px;width:88.5px;text-align:right;top:629.74px;height:15.33px;font-weight:bold;color:#0f1a6a;font-size:12.5px;padding-top:1.5px">7,000</div>
<div class="cell" style="left:681px;width:107.5px;text-align:right;top:629.74px;height:15.33px;font-weight:bold;color:#0f1a6a;font-size:12.5px;padding-top:1.5px">3,000</div>
<div class="abs" style="left:60px;top:646.07px;width:439px;height:15.33px;background:#ffffff"></div>
<div class="abs" style="left:500px;top:646.07px;width:87px;height:15.33px;background:#ffffff"></div>
<div class="abs" style="left:588px;top:646.07px;width:92px;height:15.33px;background:#ffffff"></div>
<div class="abs" style="left:681px;top:646.07px;width:111px;height:15.33px;background:#ffffff"></div>
<div class="abs" style="left:793px;top:646.07px;width:119px;height:15.33px;background:#ffffff"></div>
<div class="cell" style="left:102px;top:646.07px;height:15.33px;font-weight:normal;color:#3a3a3a;letter-spacing:.3px">Костюм летний для защиты от ОПЗ и МВ</div>
<div class="cell" style="left:500px;width:83.5px;text-align:right;top:646.07px;height:15.33px;font-weight:normal;color:#3a3a3a;font-size:12.5px;padding-top:1.5px">10,000</div>
<div class="cell" style="left:588px;width:88.5px;text-align:right;top:646.07px;height:15.33px;font-weight:normal;color:#3a3a3a;font-size:12.5px;padding-top:1.5px">7,000</div>
<div class="cell" style="left:681px;width:107.5px;text-align:right;top:646.07px;height:15.33px;font-weight:normal;color:#3a3a3a;font-size:12.5px;padding-top:1.5px">3,000</div>
<div class="abs" style="left:60px;top:662.40px;width:439px;height:15.33px;background:#d9f0fc"></div>
<div class="abs" style="left:500px;top:662.40px;width:87px;height:15.33px;background:#d9f0fc"></div>
<div class="abs" style="left:588px;top:662.40px;width:92px;height:15.33px;background:#d9f0fc"></div>
<div class="abs" style="left:681px;top:662.40px;width:111px;height:15.33px;background:#d9f0fc"></div>
<div class="abs" style="left:793px;top:662.40px;width:119px;height:15.33px;background:#d9f0fc"></div>
<div class="cell" style="left:83px;top:662.40px;height:15.33px;font-weight:bold;color:#0f1a6a;letter-spacing:.3px">Заказ поставщику 00000000011 от 02.07.2019 18:41:47</div>
<div class="cell" style="left:500px;width:83.5px;text-align:right;top:662.40px;height:15.33px;font-weight:bold;color:#0f1a6a;font-size:12.5px;padding-top:1.5px">50,000</div>
<div class="cell" style="left:588px;width:88.5px;text-align:right;top:662.40px;height:15.33px;font-weight:bold;color:#0f1a6a;font-size:12.5px;padding-top:1.5px">50,000</div>
<div class="tg" style="left:16px;top:338.17px"></div>
<div class="tl" style="left:21px;top:349.47px;width:1px;height:66.98px"></div>
<div class="tl" style="left:21px;top:416.45px;width:39px;height:1px"></div>
<div class="tg" style="left:31px;top:354.50px"></div>
<div class="tl" style="left:36px;top:365.80px;width:1px;height:18.00px"></div>
<div class="tl" style="left:36px;top:383.79px;width:24px;height:1px"></div>
<div class="tg" style="left:31px;top:387.16px"></div>
<div class="tl" style="left:36px;top:398.46px;width:1px;height:17.99px"></div>
<div class="tl" style="left:36px;top:416.45px;width:24px;height:1px"></div>
<div class="tg" style="left:16px;top:419.81px"></div>
<div class="tl" style="left:21px;top:431.12px;width:1px;height:34.32px"></div>
<div class="tl" style="left:21px;top:465.44px;width:39px;height:1px"></div>
<div class="tg" style="left:31px;top:436.14px"></div>
<div class="tl" style="left:36px;top:447.44px;width:1px;height:18.00px"></div>
<div class="tl" style="left:36px;top:465.44px;width:24px;height:1px"></div>
<div class="tg" style="left:16px;top:468.81px"></div>
<div class="tl" style="left:21px;top:480.11px;width:1px;height:17.99px"></div>
<div class="tl" style="left:21px;top:498.10px;width:39px;height:1px"></div>
<div class="tg plus" style="left:31px;top:485.13px"></div>
<div class="tg" style="left:16px;top:501.47px"></div>
<div class="tl" style="left:21px;top:512.77px;width:1px;height:34.32px"></div>
<div class="tl" style="left:21px;top:547.09px;width:39px;height:1px"></div>
<div class="tg" style="left:31px;top:517.80px"></div>
<div class="tl" style="left:36px;top:529.10px;width:1px;height:18.00px"></div>
<div class="tl" style="left:36px;top:547.09px;width:24px;height:1px"></div>
<div class="tg" style="left:16px;top:550.45px"></div>
<div class="tl" style="left:21px;top:561.75px;width:1px;height:181.30px"></div>
<div class="tl" style="left:21px;top:743.05px;width:39px;height:1px"></div>
<div class="tg" style="left:31px;top:566.78px"></div>
<div class="tl" style="left:36px;top:578.08px;width:1px;height:18.00px"></div>
<div class="tl" style="left:36px;top:596.08px;width:24px;height:1px"></div>
<div class="tg" style="left:31px;top:599.44px"></div>
<div class="tl" style="left:36px;top:610.74px;width:1px;height:18.00px"></div>
<div class="tl" style="left:36px;top:628.74px;width:24px;height:1px"></div>
<div class="tg" style="left:31px;top:632.11px"></div>
<div class="tl" style="left:36px;top:643.40px;width:1px;height:18.00px"></div>
<div class="tl" style="left:36px;top:661.40px;width:24px;height:1px"></div>
<div class="tg" style="left:31px;top:664.76px"></div>
<div class="tl" style="left:36px;top:676.06px;width:1px;height:18.00px"></div>
<div class="tl" style="left:36px;top:694.06px;width:24px;height:1px"></div>
</body></html>
